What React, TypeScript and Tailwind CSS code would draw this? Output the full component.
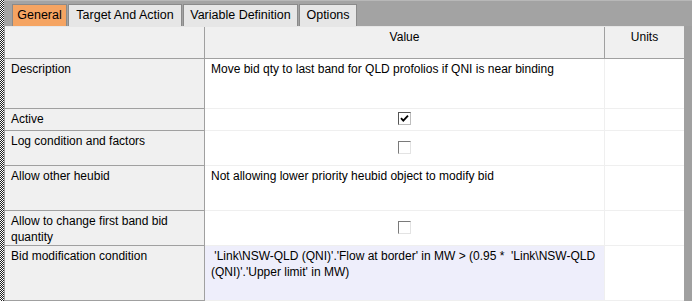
const font = { fontFamily: '"Liberation Sans", Arial, sans-serif' };

type Row = {
  label: string;
  value?: string;
  check?: boolean | null;
  h: string;
  tint?: boolean;
};

const rows: Row[] = [
  { label: 'Description', value: 'Move bid qty to last band for QLD profolios if QNI is near binding', h: 'h-[50px]' },
  { label: 'Active', check: true, h: 'h-[22px]' },
  { label: 'Log condition and factors', check: false, h: 'h-[35px]' },
  { label: 'Allow other heubid', value: 'Not allowing lower priority heubid object to modify bid', h: 'h-[45px]' },
  { label: 'Allow to change first band bid quantity', check: false, h: 'h-[35px]' },
  {
    label: 'Bid modification condition',
    value: " 'Link\\NSW-QLD (QNI)'.'Flow at border' in MW > (0.95 *  'Link\\NSW-QLD (QNI)'.'Upper limit' in MW)",
    h: 'flex-1',
    tint: true,
  },
];

const tabs = [
  { name: 'General', w: 'w-[55px]' },
  { name: 'Target And Action', w: 'w-[114px]' },
  { name: 'Variable Definition', w: 'w-[115px]' },
  { name: 'Options', w: 'w-[58px]' },
];

function CheckBox({ checked }: { checked: boolean }) {
  return (
    <div
      className={
        checked
          ? 'w-[13px] h-[13px] bg-white border border-t-[#555] border-l-[#555] border-b-[#bdbdbd] border-r-[#bdbdbd] flex items-center justify-center'
          : 'w-[13px] h-[13px] bg-white border border-t-[#7a7a7a] border-l-[#7a7a7a] border-b-[#e3e3e3] border-r-[#e3e3e3]'
      }
    >
      {checked && (
        <svg width="9" height="9" viewBox="0 0 9 9">
          <path d="M1 4.2 L3.3 6.6 L8 1.6" stroke="#000" strokeWidth="1.8" fill="none" />
        </svg>
      )}
    </div>
  );
}

export default function App() {
  return (
    <div className="w-[692px] h-[301px] flex overflow-hidden text-[12px] text-[#000] bg-[#a0a0a0]" style={font}>
      {/* dotted resize edge */}
      <div className="w-[4px] h-full bg-[repeating-conic-gradient(#222_0_25%,#fff_0_50%)] bg-[length:2px_2px]" />

      <div className="flex-1 flex flex-col">
        {/* tab strip */}
        <div className="h-[26px] flex items-end gap-[1px] pl-[8px] bg-[#a3a3a3] border-t border-[#b8b8b8]">
          {tabs.map((t, i) => (
            <div
              key={t.name}
              className={
                (i === 0 ? 'bg-[#f5a462] ' : 'bg-[#e6e6e6] ') +
                t.w +
                ' h-[22px] flex items-center justify-center border border-b-0 border-[#8a8a8a] text-[12.5px]'
              }
            >
              {t.name}
            </div>
          ))}
        </div>

        <div className="flex-1 flex">
          {/* grid */}
          <div className="w-[680px] flex flex-col border-l border-[#a0a0a0] bg-white">
            <div className="h-[33px] flex bg-[#f0f0f0] border-b border-[#a0a0a0] border-t border-t-[#e6e6e6]">
              <div className="w-[200px] border-r border-[#a0a0a0]" />
              <div className="w-[400px] border-r border-[#a0a0a0] text-center pt-[2px] leading-[16px]">Value</div>
              <div className="flex-1 text-center pt-[2px] leading-[16px]">Units</div>
            </div>

            {rows.map((r) => (
              <div key={r.label} className={`${r.h} flex`}>
                <div className="w-[200px] bg-[#f0f0f0] border-r border-b border-[#a0a0a0] px-[6px] pt-[2px] leading-[16px]">
                  {r.label}
                </div>
                <div
                  className={
                    (r.tint ? 'bg-[#eeeefb] ' : 'bg-white ') +
                    'w-[400px] border-r border-b border-[#efefef] px-[6px] pt-[2px] leading-[16px] whitespace-pre-wrap'
                  }
                >
                  {r.check !== undefined && r.check !== null ? (
                    <div className="h-full flex items-center justify-center -mt-[2px]">
                      <CheckBox checked={r.check} />
                    </div>
                  ) : (
                    r.value
                  )}
                </div>
                <div className="flex-1 border-b border-[#efefef]" />
              </div>
            ))}
          </div>
          <div className="flex-1 bg-[#a0a0a0]" />
        </div>
      </div>
    </div>
  );
}
